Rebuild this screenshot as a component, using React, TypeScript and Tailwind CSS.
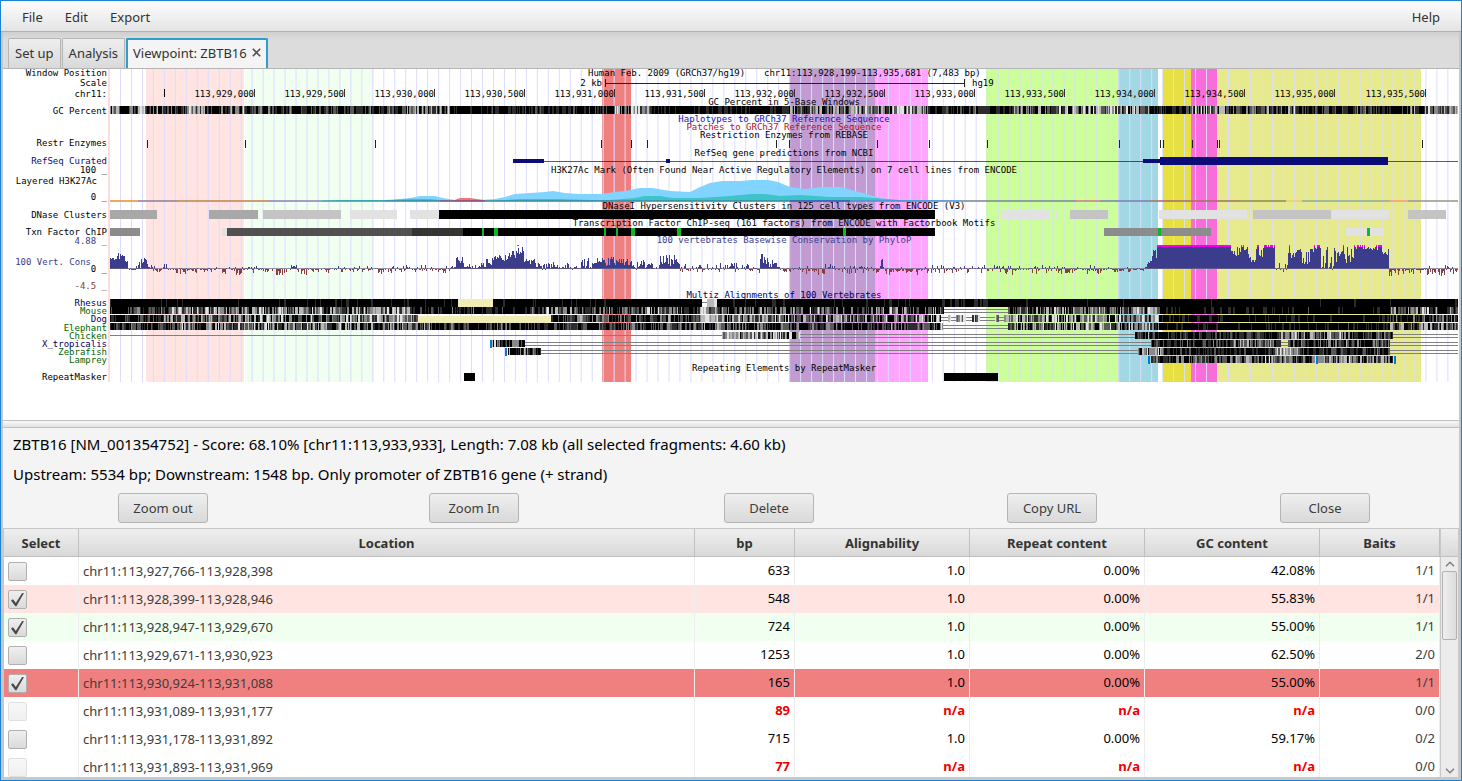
import { useState } from "react";

const LEFT = 110;
const RIGHT = 1458;

function makeRandom(seed: number) {
  let s = seed;
  return () => {
    s = (s * 1664525 + 1013904223) % 4294967296;
    return s / 4294967296;
  };
}

const BANDS: [number, number, string][] = [
  [146, 244, "#ffe4e1"],
  [245, 374, "#f0fff0"],
  [602, 631, "#f08080"],
  [789, 875, "#c19bd2"],
  [875, 928, "#ffa5ff"],
  [986, 1118, "#ccff99"],
  [1118, 1158, "#a2d7e4"],
  [1163, 1191, "#e6e040"],
  [1191, 1217, "#f86cdc"],
  [1218, 1421, "#e6ea8c"],
];

const GRID = Array.from({ length: 122 }, (_, i) => 120.5 + i * 10.97);

const SIDE_LABELS: [string, number, string, number][] = [
  ["Window Position", 76, "#000", 107],
  ["Scale", 86, "#000", 107],
  ["chr11:", 97, "#000", 107],
  ["GC Percent", 114, "#000", 107],
  ["Restr Enzymes", 146, "#000", 107],
  ["RefSeq Curated", 164, "#0c0c78", 107],
  ["100 _", 173, "#000", 107],
  ["Layered H3K27Ac", 184, "#000", 97],
  ["0 _", 200, "#000", 107],
  ["DNase Clusters", 218, "#000", 107],
  ["Txn Factor ChIP", 235, "#000", 107],
  ["4.88 _", 244, "#3c3c8c", 107],
  ["100 Vert. Cons", 265, "#3c3c8c", 91],
  ["0 _", 272, "#000", 107],
  ["-4.5 _", 289, "#8c3c3c", 107],
  ["Rhesus", 306, "#000064", 107],
  ["Mouse", 314, "#006400", 107],
  ["Dog", 322, "#000064", 107],
  ["Elephant", 331, "#006400", 107],
  ["Chicken", 339, "#006400", 107],
  ["X_tropicalis", 347, "#000064", 107],
  ["Zebrafish", 355, "#006400", 107],
  ["Lamprey", 363, "#006400", 107],
  ["RepeatMasker", 380, "#000", 107],
];

const TITLES: [string, number, string][] = [
  ["GC Percent in 5-Base Windows", 105, "#000"],
  ["Haplotypes to GRCh37 Reference Sequence", 122, "#1414b4"],
  ["Patches to GRCh37 Reference Sequence", 130, "#b41414"],
  ["Restriction Enzymes from REBASE", 138, "#000"],
  ["RefSeq gene predictions from NCBI", 156, "#000"],
  ["H3K27Ac Mark (Often Found Near Active Regulatory Elements) on 7 cell lines from ENCODE", 173, "#000"],
  ["DNaseI Hypersensitivity Clusters in 125 cell types from ENCODE (V3)", 209, "#000"],
  ["Transcription Factor ChIP-seq (161 factors) from ENCODE with Factorbook Motifs", 226, "#000"],
  ["100 vertebrates Basewise Conservation by PhyloP", 243, "#3c3c8c"],
  ["Multiz Alignments of 100 Vertebrates", 298, "#000064"],
  ["Repeating Elements by RepeatMasker", 371, "#000"],
];

const POSITIONS = [
  "113,929,000", "113,929,500", "113,930,000", "113,930,500", "113,931,000", "113,931,500", "113,932,000",
  "113,932,500", "113,933,000", "113,933,500", "113,934,000", "113,934,500", "113,935,000", "113,935,500",
];

const CUT_SITES = [147, 245, 375, 601, 631, 647, 776, 789, 877, 929, 987, 1119, 1160, 1163, 1192, 1217, 1219, 1422];

const DNASE: [number, number, string][] = [
  [110, 157, "#a8a8a8"], [209, 258, "#a8a8a8"], [263, 341, "#c4c4c4"], [350, 397, "#e2e2e2"],
  [410, 439, "#e2e2e2"], [439, 935, "#000"], [1001, 1050, "#e2e2e2"], [1055, 1057, "#e2e2e2"],
  [1070, 1108, "#c4c4c4"], [1159, 1247, "#e2e2e2"], [1253, 1331, "#c4c4c4"], [1332, 1389, "#e2e2e2"],
  [1408, 1446, "#c4c4c4"],
];

const CHIP: [number, number, string][] = [
  [110, 140, "#8c8c8c"], [222, 227, "#e2e2e2"], [227, 412, "#505050"], [412, 463, "#343434"],
  [463, 935, "#000"], [1104, 1211, "#8c8c8c"], [1346, 1384, "#e2e2e2"],
  [482, 484, "#14b428"], [494, 498, "#14b428"], [604, 606, "#14b428"], [616, 618, "#14b428"],
  [631, 635, "#14b428"], [677, 681, "#14b428"], [843, 846, "#14b428"], [1158, 1161, "#14b428"],
  [1367, 1370, "#14b428"],
];

const MARK_BASE: [number, number, string][] = [
  [110, 138, "#e8943c"], [138, 178, "#8c84a0"], [178, 268, "#c08850"], [268, 322, "#9088b0"], [322, 385, "#3ca0a0"],
  [385, 440, "#3c8ca0"], [440, 485, "#80507c"], [485, 790, "#3c8ca0"], [790, 850, "#3858b4"], [850, 960, "#5890d0"],
  [960, 1076, "#7c8c98"], [1076, 1100, "#d08080"], [1100, 1150, "#7c84b8"], [1150, 1240, "#a87464"],
  [1240, 1286, "#8c9058"], [1286, 1302, "#f8c870"], [1302, 1390, "#90b090"], [1390, 1408, "#f0a080"], [1408, 1458, "#a09890"],
];

// start, end, mean darkness, spread
type Segment = [number, number, number, number];

const GC: Segment[] = [
  [110, 120, 0.6, 0.4], [120, 138, 0.8, 0.4], [138, 145, 0.22, 0.1], [145, 186, 0.75, 0.4], [186, 205, 0.35, 0.4],
  [205, 215, 0.85, 0.3], [215, 244, 0.65, 0.5], [244, 280, 0.8, 0.4], [280, 370, 0.82, 0.35], [370, 405, 0.75, 0.4],
  [405, 450, 0.55, 0.5], [450, 490, 0.95, 0.2], [490, 614, 0.9, 0.3], [614, 650, 0.5, 0.5], [650, 790, 0.93, 0.25],
  [790, 890, 0.6, 0.5], [890, 930, 0.45, 0.5], [930, 1000, 0.85, 0.35], [1000, 1050, 0.7, 0.5],
  [1050, 1115, 0.5, 0.5], [1115, 1150, 0.5, 0.5], [1150, 1190, 0.85, 0.3], [1190, 1225, 0.55, 0.5],
  [1225, 1300, 0.75, 0.4], [1300, 1410, 0.85, 0.35], [1410, 1458, 0.6, 0.5],
];

const ALIGNMENTS: { y: number; parts: Segment[] }[] = [
  { y: 299, parts: [[110, 458, 0.97, 0.18], [493, 702, 0.97, 0.16], [707, 717, 0.25, 0.2], [717, 940, 0.97, 0.18], [940, 990, 0.9, 0.25], [990, 1458, 0.98, 0.16]] },
  { y: 307, parts: [[110, 140, 0.85, 0.4], [140, 170, 0.85, 0.4], [170, 244, 0.55, 0.5], [244, 330, 0.55, 0.5], [330, 410, 0.55, 0.5], [410, 530, 0.88, 0.3], [530, 700, 0.7, 0.45], [700, 720, 0.4, 0.4], [720, 944, 0.7, 0.45], [1008, 1110, 0.6, 0.5], [1110, 1160, 0.55, 0.5], [1160, 1390, 0.95, 0.22], [1390, 1458, 0.6, 0.5]] },
  { y: 315, parts: [[110, 160, 0.88, 0.35], [160, 280, 0.65, 0.5], [280, 350, 0.75, 0.5], [350, 418, 0.45, 0.45], [551, 570, 0.85, 0.4], [570, 600, 0.55, 0.5], [600, 700, 0.75, 0.4], [700, 725, 0.35, 0.3], [725, 941, 0.6, 0.5], [948, 951, 0.3, 0.3], [956, 966, 0.3, 0.3], [972, 980, 0.4, 0.4], [995, 999, 0.4, 0.3], [1004, 1160, 0.55, 0.5], [1160, 1390, 0.95, 0.22], [1390, 1458, 0.8, 0.4]] },
  { y: 323, parts: [[110, 180, 0.85, 0.4], [180, 244, 0.65, 0.5], [244, 330, 0.55, 0.5], [330, 430, 0.65, 0.5], [430, 620, 0.85, 0.35], [620, 943, 0.75, 0.4], [1008, 1160, 0.55, 0.5], [1160, 1390, 0.95, 0.22], [1390, 1458, 0.6, 0.5]] },
  { y: 332, parts: [[722, 800, 0.45, 0.5], [1135, 1150, 0.8, 0.4], [1150, 1280, 0.85, 0.25], [1280, 1345, 0.6, 0.45], [1345, 1393, 0.75, 0.35]] },
  { y: 340, parts: [[492, 525, 0.75, 0.5], [1151, 1230, 0.8, 0.3], [1230, 1281, 0.65, 0.4], [1288, 1390, 0.75, 0.35]] },
  { y: 348, parts: [[508, 541, 0.75, 0.5], [1138, 1165, 0.55, 0.5], [1165, 1275, 0.88, 0.25], [1275, 1300, 0.35, 0.4], [1300, 1390, 0.85, 0.3]] },
  { y: 356, parts: [[1151, 1230, 0.75, 0.4], [1230, 1393, 0.6, 0.4]] },
];

// x range and y of the connecting lines drawn in alignment gaps
const CONNECTORS: [number, number, number][] = [
  [702, 707, 302],
  [944, 1008, 309], [944, 1008, 312],
  [941, 1004, 317], [941, 1004, 320],
  [943, 1008, 325], [943, 1008, 328],
  [110, 722, 335],
  [800, 1135, 334], [800, 1135, 337], [1393, 1458, 334], [1393, 1458, 337],
  [525, 1151, 342], [525, 1151, 345], [1281, 1288, 342], [1281, 1288, 345], [1390, 1458, 342], [1390, 1458, 345],
  [541, 1138, 350], [541, 1138, 353], [1390, 1458, 350], [1390, 1458, 353],
];

const SHADES = ["#000000", "#2c2c2c", "#585858", "#8a8a8a", "#b8b8b8", "#e2e2e2"];

function shadePaths(parts: Segment[], y: number, h: number, seed: number) {
  const random = makeRandom(seed);
  const paths = SHADES.map(() => "");
  for (const [x0, x1, mean, spread] of parts) {
    let x = x0;
    while (x < x1) {
      const w = Math.min(random() < 0.7 ? 1 : 2, x1 - x);
      const wide = random() < 0.12 ? 1.5 : 0.9;
      const dark = Math.max(0, Math.min(1, mean + (random() - 0.5) * 2 * spread * wide));
      const k = Math.min(5, Math.floor((1 - dark) * 6));
      paths[k] += `M${x} ${y}h${w}v${h}h${-w}z`;
      x += w;
    }
  }
  return paths;
}

function Barcode({ parts, y, h, seed }: { parts: Segment[]; y: number; h: number; seed: number }) {
  return (
    <g shapeRendering="crispEdges">
      {shadePaths(parts, y, h, seed).map((d, i) => (
        <path key={i} d={d} fill={SHADES[i]} />
      ))}
    </g>
  );
}

// start, end, lowest and highest positive score, deepest negative score
const CONSERVATION: [number, number, number, number, number][] = [
  [110, 121, 9, 17, 0], [121, 125, 12, 18, 0], [125, 128, 4, 9, 0], [128, 136, 0, 3, 1], [136, 141, 1, 8, 0],
  [141, 148, 4, 12, 0], [148, 152, 1, 5, 0], [152, 163, 0, 3, 3], [163, 168, 1, 7, 0], [168, 215, 0, 1, 5],
  [215, 244, 0, 2, 5], [244, 275, 0, 3, 4], [275, 291, 0, 2, 6], [291, 297, 2, 7, 0], [297, 335, 0, 1, 6],
  [335, 372, 0, 3, 3], [372, 400, 0, 3, 5], [400, 430, 0, 4, 3], [430, 450, 0, 3, 4], [450, 456, 1, 3, 0],
  [456, 464, 5, 13, 0], [464, 468, 2, 6, 0], [468, 478, 1, 5, 1], [478, 486, 2, 7, 0], [486, 492, 4, 11, 0],
  [492, 508, 8, 14, 0], [508, 516, 10, 21, 0], [516, 524, 13, 24, 0], [524, 536, 5, 10, 0], [536, 550, 2, 8, 1],
  [550, 570, 1, 7, 2], [570, 595, 1, 12, 1], [595, 632, 3, 12, 0], [632, 648, 1, 10, 1], [648, 660, 0, 6, 2],
  [660, 680, 3, 15, 0], [680, 715, 0, 5, 3], [715, 730, 0, 6, 3], [730, 735, 3, 10, 0], [735, 760, 0, 6, 4],
  [760, 768, 5, 15, 0], [768, 780, 2, 9, 1], [780, 825, 0, 3, 5], [825, 835, 0, 6, 2], [835, 880, 0, 3, 5],
  [880, 884, 2, 11, 0], [884, 925, 0, 2, 6], [925, 1000, 0, 4, 4], [1000, 1110, 0, 4, 5], [1110, 1145, 0, 2, 3],
  [1145, 1148, 2, 6, 1], [1148, 1152, 5, 10, 0], [1152, 1157, 10, 20, 0], [1157, 1231, 24, 24, 0],
  [1231, 1237, 12, 19, 0], [1237, 1249, 13, 24, 0], [1249, 1256, 3, 14, 0], [1256, 1264, 12, 24, 0],
  [1264, 1275, 21, 24, 0], [1275, 1288, 0, 9, 3], [1288, 1302, 9, 24, 0], [1302, 1310, 3, 20, 0],
  [1310, 1321, 16, 24, 0], [1321, 1334, 0, 22, 4], [1334, 1355, 4, 24, 0], [1355, 1374, 19, 24, 0],
  [1374, 1389, 13, 24, 0], [1389, 1394, 0, 0, 9], [1394, 1421, 0, 1, 6], [1421, 1458, 0, 4, 6],
];

function conservationPaths() {
  const random = makeRandom(97);
  let up = "";
  let down = "";
  let cap = "";
  for (const [x0, x1, lo, hi, neg] of CONSERVATION) {
    for (let x = x0; x < x1; x++) {
      const r = random();
      const negative = neg > 0 && (lo === 0 ? random() < neg / (neg + hi + 1) : random() < 0.1);
      if (negative) {
        const d = Math.max(1, Math.round(r * r * neg + 0.6));
        down += `M${x} 269h1v${d}h-1z`;
      } else {
        const h = Math.round(lo + (lo > 2 ? r : r * r) * (hi - lo));
        if (h > 0) up += `M${x} 269h1v${-h}h-1z`;
        if (h >= 23 && x > 1150) cap += `M${x} 245h1v2h-1z`;
      }
    }
  }
  return { up, down, cap };
}

const SCORES = conservationPaths();

const MARK_BLUE =
  "M385 201L400 199L410 198L420 196H435L443 198L455 200H480L495 199L505 197L515 194L530 193L545 192L553 191L565 193L578 194H602L615 192L625 191L640 188H652L670 191L690 192L700 187L710 183L722 181L740 181L752 180H768L778 182L790 187L805 189L822 187H840L855 191L870 195L880 198L895 200L960 201Z";
const MARK_TEAL =
  "M322 201L345 200H385L410 199H430L450 201ZM490 201L520 199H560L590 200H610L635 198L645 196H660L672 198L700 198L730 196L752 194H765L780 196L800 195L830 197H860L900 200L970 201Z";

function GenomeChart() {
  return (
    <svg
      viewBox="3 69 1456 313"
      className="block h-auto w-full"
      role="img"
      aria-label="Genome browser tracks for the viewpoint"
      fontFamily="'DejaVu Sans Mono', monospace"
      fontSize="9"
    >
      {BANDS.map(([a, b, c]) => (
        <rect key={a} x={a} y={69} width={b - a} height={313} fill={c} />
      ))}
      <rect x={108} y={69} width={2} height={313} fill="#ffdcdc" />
      {GRID.map((x) => (
        <rect key={x} x={x - 0.5} y={69} width={1} height={313} fill="#dcdcff" />
      ))}

      {SIDE_LABELS.map(([t, y, c, x]) => (
        <text key={t + y} x={x} y={y} fill={c} textAnchor="end">
          {t}
        </text>
      ))}
      <text x={588} y={76}>Human Feb. 2009 (GRCh37/hg19)</text>
      <text x={764} y={76}>chr11:113,928,199-113,935,681 (7,483 bp)</text>
      <text x={602} y={86} textAnchor="end">2 kb</text>
      <text x={972} y={86}>hg19</text>
      <path d="M605.500 79v8M964.500 79v8M605 83.500h360" stroke="#222" fill="none" />
      <rect x={164} y={89} width={1} height={8} />
      {POSITIONS.map((p, i) => {
        const x = Math.round(254.5 + i * 90.08);
        return (
          <g key={p}>
            <text x={x - 1} y={97} textAnchor="end">{p}</text>
            <rect x={x - 1} y={89} width={1} height={8} fill="#333" />
          </g>
        );
      })}
      {TITLES.map(([t, y, c]) => (
        <text key={t} x={784} y={y} fill={c} textAnchor="middle">
          {t}
        </text>
      ))}

      <Barcode parts={GC} y={106} h={8} seed={11} />

      {CUT_SITES.map((x) => (
        <rect key={x} x={x} y={140} width={1} height={8} fill="#222" />
      ))}

      <g fill="#0c0c78">
        <rect x={513} y={161} width={945} height={1} opacity={0.7} />
        <rect x={513} y={159} width={31} height={4} />
        <rect x={666} y={159} width={4} height={4} />
        <rect x={1143} y={159} width={17} height={4} />
        <rect x={1160} y={157} width={228} height={8} />
      </g>

      <path d={MARK_BLUE} fill="#80d4ff" />
      <path d={MARK_TEAL} fill="#3cc4c8" />
      <path d="M452 201L460 198H470L484 200V201Z" fill="#f47478" />
      {MARK_BASE.map(([a, b, c]) => (
        <rect key={a} x={a} y={200} width={b - a} height={2} fill={c} opacity={0.8} />
      ))}

      {DNASE.map(([a, b, c]) => (
        <rect key={a} x={a} y={210} width={b - a} height={9} fill={c} />
      ))}
      {CHIP.map(([a, b, c]) => (
        <rect key={a} x={a} y={228} width={b - a} height={8} fill={c} />
      ))}

      <g shapeRendering="crispEdges">
        <path d={SCORES.up} fill="#3c3c8c" />
        <path d={SCORES.down} fill="#8c3c3c" />
        <path d={SCORES.cap} fill="#f000f0" />
        <rect x={517} y={245} width={2} height={1} fill="#f000f0" />
        <rect x={LEFT} y={268} width={RIGHT - LEFT} height={1} fill="#6c6484" opacity={0.7} />
      </g>

      {CONNECTORS.map(([a, b, y]) => (
        <rect key={`${a}-${y}`} x={a} y={y} width={b - a} height={1} fill="#808080" />
      ))}
      {ALIGNMENTS.map(({ y, parts }, i) => (
        <Barcode key={y} parts={parts} y={y} h={i === 0 ? 8 : 7} seed={31 + i * 7} />
      ))}
      <rect x={458} y={299} width={35} height={8} fill="#f0eeb4" />
      <rect x={418} y={316} width={133} height={7} fill="#f0eeb4" />
      <g fill="#0c78c8">
        <rect x={490} y={340} width={2} height={8} />
        <rect x={505} y={348} width={2} height={8} />
        <rect x={1148} y={356} width={2} height={8} />
        <rect x={1316} y={356} width={2} height={8} />
        <rect x={1394} y={356} width={2} height={8} />
      </g>
      <rect x={464} y={373} width={11} height={8} />
      <rect x={944} y={373} width={54} height={8} />
    </svg>
  );
}

type Fragment = {
  location: string;
  bp: number;
  align: string;
  repeat: string;
  gc: string;
  baits: string;
  tint: string;
  low?: boolean;
};

const FRAGMENTS: Fragment[] = [
  { location: "chr11:113,927,766-113,928,398", bp: 633, align: "1.0", repeat: "0.00%", gc: "42.08%", baits: "1/1", tint: "bg-white" },
  { location: "chr11:113,928,399-113,928,946", bp: 548, align: "1.0", repeat: "0.00%", gc: "55.83%", baits: "1/1", tint: "bg-[#ffe4e1]" },
  { location: "chr11:113,928,947-113,929,670", bp: 724, align: "1.0", repeat: "0.00%", gc: "55.00%", baits: "1/1", tint: "bg-[#f0fff0]" },
  { location: "chr11:113,929,671-113,930,923", bp: 1253, align: "1.0", repeat: "0.00%", gc: "62.50%", baits: "2/0", tint: "bg-white" },
  { location: "chr11:113,930,924-113,931,088", bp: 165, align: "1.0", repeat: "0.00%", gc: "55.00%", baits: "1/1", tint: "bg-[#f08080]" },
  { location: "chr11:113,931,089-113,931,177", bp: 89, align: "n/a", repeat: "n/a", gc: "n/a", baits: "0/0", tint: "bg-white", low: true },
  { location: "chr11:113,931,178-113,931,892", bp: 715, align: "1.0", repeat: "0.00%", gc: "59.17%", baits: "0/2", tint: "bg-white" },
  { location: "chr11:113,931,893-113,931,969", bp: 77, align: "n/a", repeat: "n/a", gc: "n/a", baits: "0/0", tint: "bg-white", low: true },
];

const COLUMNS = [
  { name: "Select", width: "w-[75px]" },
  { name: "Location", width: "" },
  { name: "bp", width: "w-[100px]" },
  { name: "Alignability", width: "w-[175px]" },
  { name: "Repeat content", width: "w-[175px]" },
  { name: "GC content", width: "w-[175px]" },
  { name: "Baits", width: "w-[120px]" },
];

function RowCheck({ label, checked, disabled, onChange }: { label: string; checked: boolean; disabled?: boolean; onChange: () => void }) {
  return (
    <label className={`relative block size-[19px] ${disabled ? "opacity-40" : ""}`}>
      <input
        type="checkbox"
        aria-label={label}
        checked={checked}
        disabled={disabled}
        onChange={onChange}
        className="block size-[19px] appearance-none rounded-xs border border-[#b0b0b0] bg-linear-to-b from-[#efefef] to-[#dadada]"
      />
      {checked && (
        <svg viewBox="0 0 19 19" className="pointer-events-none absolute inset-0" aria-hidden="true">
          <path d="M3 10.500L5 9.300L7.800 13L14 3.200L16 3L8.400 16.200H7.400Z" fill="#484848" />
        </svg>
      )}
    </label>
  );
}

function FragmentTable() {
  const [selected, setSelected] = useState([1, 2, 4]);
  const toggle = (i: number) => setSelected((s) => (s.includes(i) ? s.filter((v) => v !== i) : [...s, i]));
  const cell = "h-7 border-r border-[#ededed] p-0 pr-1 pb-0.5";
  return (
    <div className="flex min-h-0 flex-1 border-x border-t border-[#c8c8c8] bg-white">
      <div className="min-w-0 flex-1 overflow-y-auto [scrollbar-width:none]">
        <table className="w-full table-fixed border-separate border-spacing-0 text-[13px] leading-5">
          <thead className="sticky top-0 z-10">
            <tr>
              {COLUMNS.map((c) => (
                <th
                  key={c.name}
                  scope="col"
                  className={`${c.width} h-7 border-r border-b border-[#c0c0c0] bg-linear-to-b from-[#efefef] to-[#d9d9d9] p-0 text-center font-bold text-[#333]`}
                >
                  {c.name}
                </th>
              ))}
            </tr>
          </thead>
          <tbody>
            {FRAGMENTS.map((f, i) => {
              const value = f.low ? "font-bold text-[#f00000]" : "text-black";
              return (
                <tr key={f.location} className={f.tint}>
                  <td className="h-7 border-r border-[#ededed] p-0 pl-1">
                    <RowCheck
                      label={`Select ${f.location}`}
                      checked={selected.includes(i)}
                      disabled={f.low}
                      onChange={() => toggle(i)}
                    />
                  </td>
                  <td className="h-7 border-r border-[#ededed] p-0 pl-1 text-[#3c3c3c]">{f.location}</td>
                  <td className={`${cell} text-right ${value}`}>{f.bp}</td>
                  <td className={`${cell} text-right ${value}`}>{f.align}</td>
                  <td className={`${cell} text-right ${value}`}>{f.repeat}</td>
                  <td className={`${cell} text-right ${value}`}>{f.gc}</td>
                  <td className={`${cell} text-right text-[#3c3c3c]`}>{f.baits}</td>
                </tr>
              );
            })}
          </tbody>
        </table>
      </div>
      <div className="flex w-[18px] flex-col border-l border-[#c8c8c8] bg-[#ececec]">
        <div className="h-7 border-b border-[#c0c0c0] bg-linear-to-b from-[#efefef] to-[#d9d9d9]" />
        <button type="button" aria-label="Scroll up" className="flex h-[14px] items-center justify-center">
          <svg viewBox="0 0 10 6" className="h-[6px] w-[10px]" fill="none" stroke="#808080" strokeWidth="1.5">
            <path d="M1 5.200L5 1.200L9 5.200" />
          </svg>
        </button>
        <div className="mx-px h-[69px] rounded-xs border border-[#b0b0b0] bg-linear-to-r from-[#efefef] to-[#dcdcdc]" />
        <div className="flex-1" />
        <button type="button" aria-label="Scroll down" className="flex h-[12px] items-center justify-center">
          <svg viewBox="0 0 10 6" className="h-[6px] w-[10px]" fill="none" stroke="#808080" strokeWidth="1.5">
            <path d="M1 0.800L5 4.800L9 0.800" />
          </svg>
        </button>
      </div>
    </div>
  );
}

export default function App() {
  return (
    <div className="flex h-screen flex-col border border-[#1883d7] bg-[#f4f4f4] font-['Noto_Sans',sans-serif] text-[13px] leading-5 text-[#323232]">
      <nav aria-label="Main menu" className="flex h-[31px] shrink-0 items-center gap-[22px] border-b border-[#b0b0b0] bg-linear-to-b from-[#fdfdfd] to-[#e4e4e4] px-[21px] pt-0.5">
        <button type="button">File</button>
        <button type="button">Edit</button>
        <button type="button">Export</button>
        <button type="button" className="ml-auto">Help</button>
      </nav>

      <div className="flex min-h-0 flex-1 flex-col border-x-2 border-b-3 border-[#c8c8c8]">
        <div role="tablist" className="flex h-[37px] shrink-0 items-end gap-px border-b border-[#b5b5b5] bg-linear-to-b from-[#cfcfcf] to-[#dcdcdc] to-20% pl-[5px]">
          <button type="button" role="tab" aria-selected="false" className="h-[30px] rounded-t-xs border border-b-0 border-[#b5b5b5] bg-linear-to-b from-[#efefef] to-[#d9d9d9] px-[6px] pb-0.5">
            Set up
          </button>
          <button type="button" role="tab" aria-selected="false" className="h-[30px] rounded-t-xs border border-b-0 border-[#b5b5b5] bg-linear-to-b from-[#efefef] to-[#d9d9d9] px-[6px] pb-0.5">
            Analysis
          </button>
          <button type="button" role="tab" aria-selected="true" className="flex h-[30px] items-center gap-[5px] rounded-t-xs border-2 border-b-0 border-[#2f9fc9] bg-[#f4f4f4] px-[5px] pb-[3px]">
            Viewpoint: ZBTB16
            <svg viewBox="0 0 9 9" className="size-[9px]" fill="none" stroke="#555" strokeWidth="1.6" aria-hidden="true">
              <path d="M0.800 0.800L8.200 8.200M8.200 0.800L0.800 8.200" />
            </svg>
          </button>
        </div>

        <div className="shrink-0 bg-white pb-[38px]">
          <GenomeChart />
        </div>
        <div role="separator" className="h-2 shrink-0 border-y border-[#c0c0c0] bg-linear-to-b from-[#f8f8f8] to-[#e2e2e2]" />

        <section className="shrink-0 text-black">
          <p className="px-[10px] pt-[6px] text-[15px] leading-5">
            ZBTB16 [NM_001354752] - Score: 68.10% [chr11:113,933,933], Length: 7.08 kb (all selected fragments: 4.60 kb)
          </p>
          <p className="mt-[10px] px-[10px] text-[15px] leading-5">
            Upstream: 5534 bp; Downstream: 1548 bp. Only promoter of ZBTB16 gene (+ strand)
          </p>
          <div className="mt-[9px] mb-[5px] grid grid-cols-[320fr_302fr_288fr_278fr_268fr] justify-items-center text-[#3c3c3c]">
            {["Zoom out", "Zoom In", "Delete", "Copy URL", "Close"].map((name) => (
              <button
                key={name}
                type="button"
                className="h-[30px] w-[90px] rounded-[3px] border border-[#b5b5b5] bg-linear-to-b from-[#efefef] to-[#d9d9d9]"
              >
                {name}
              </button>
            ))}
          </div>
        </section>

        <FragmentTable />
      </div>
    </div>
  );
}
